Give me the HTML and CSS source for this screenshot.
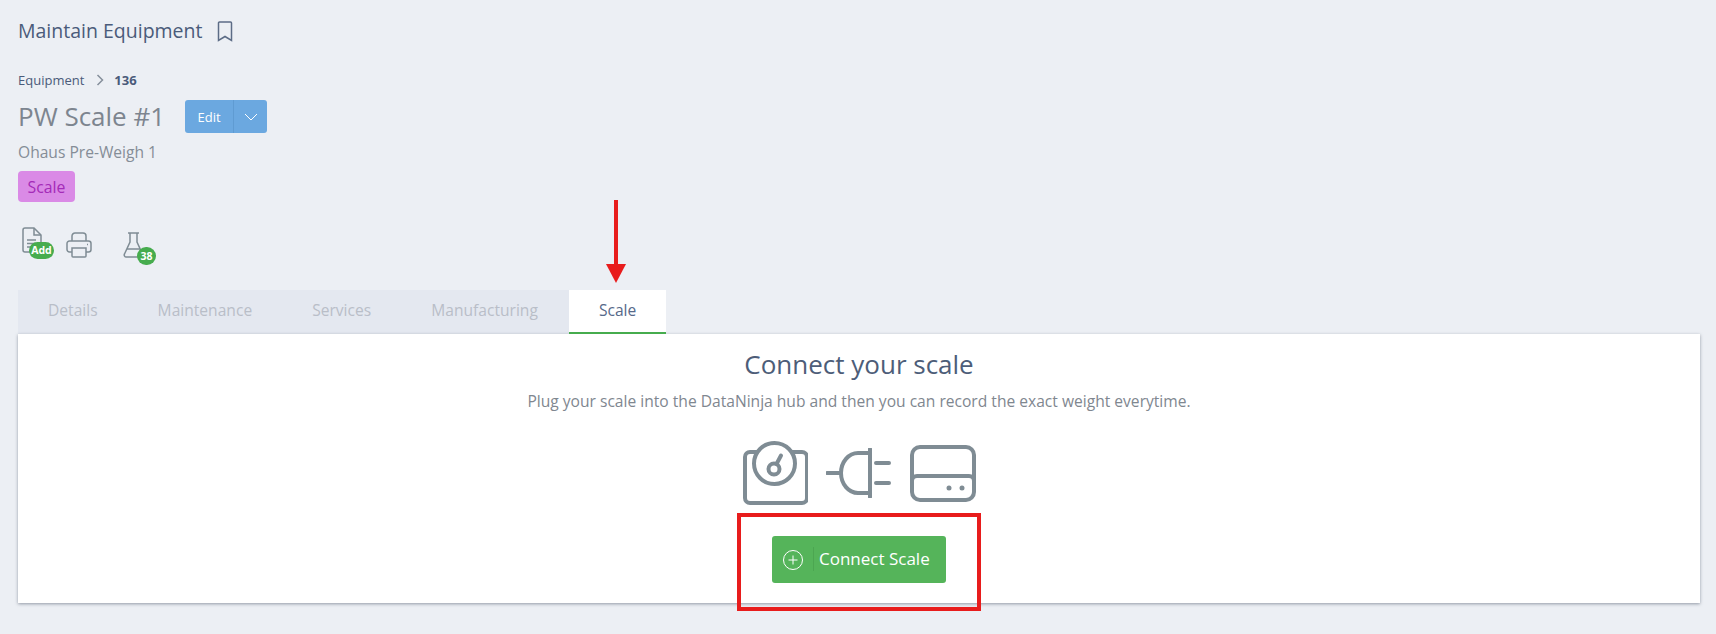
FILE: index.html
```html
<!DOCTYPE html>
<html lang="en">
<head>
  <meta charset="UTF-8" />
  <title>Maintain Equipment</title>
  <link rel="stylesheet" href="styles.css">
</head>
<body>
  <div class="page-title">
    <h1>Maintain Equipment</h1>
    <svg class="bookmark" width="16" height="21" viewBox="0 0 16 21"><path d="M2.5 1h11a1 1 0 0 1 1 1v17.5L8 15.5l-6.500 4V2a1 1 0 0 1 1-1z"/></svg>
  </div>

  <div class="breadcrumb">
    <span>Equipment</span>
    <svg width="8" height="12" viewBox="0 0 8 12"><path d="M1.500 1l5 5-5 5"/></svg>
    <b>136</b>
  </div>

  <div class="heading-row">
    <h2>PW Scale #1</h2>
    <div class="btn-group">
      <button class="btn-edit">Edit</button>
      <button class="btn-caret"><svg width="14" height="8" viewBox="0 0 14 8"><path d="M1 1l6 6 6-6"/></svg></button>
    </div>
  </div>
  <div class="subtitle">Ohaus Pre-Weigh 1</div>
  <span class="tag">Scale</span>

  <div class="actions">
    <div class="action action-doc">
      <svg width="20" height="27" viewBox="0 0 20 27"><path d="M3 1h9l7 7v15a2 2 0 0 1-2 2H3a2 2 0 0 1-2-2V3a2 2 0 0 1 2-2z"/><path d="M12 1v7h7M5 13h9M5 16.500h9M5 20h6"/></svg>
      <span class="badge badge-add">Add</span>
    </div>
    <div class="action action-print">
      <svg width="26" height="26" viewBox="0 0 26 26"><path d="M6 9V4a3 3 0 0 1 3-3h8a3 3 0 0 1 3 3v5"/><path d="M6 20H3.500A2.500 2.500 0 0 1 1 17.500V11.500A2.500 2.500 0 0 1 3.500 9h19a2.500 2.500 0 0 1 2.500 2.500v6a2.500 2.500 0 0 1-2.500 2.500H20"/><path d="M6 16h14v8a1 1 0 0 1-1 1H7a1 1 0 0 1-1-1z"/><path d="M21 12.500h1"/></svg>
    </div>
    <div class="action action-flask">
      <svg width="21" height="26" viewBox="0 0 21 26"><path d="M5 1h11M7 1v9L1.500 22a2 2 0 0 0 2 3h14a2 2 0 0 0 2-3L14 10V1M4 17h13"/></svg>
      <span class="badge badge-count">38</span>
    </div>
  </div>

  <div class="tabs">
    <div class="tab">Details</div>
    <div class="tab">Maintenance</div>
    <div class="tab">Services</div>
    <div class="tab">Manufacturing</div>
    <div class="tab active">Scale</div>
  </div>

  <div class="card">
    <h3>Connect your scale</h3>
    <p>Plug your scale into the DataNinja hub and then you can record the exact weight everytime.</p>
    <div class="hero-icons">
      <svg width="66" height="64" viewBox="0 0 66 64">
        <rect x="3" y="11" width="62" height="51" rx="5"/>
        <circle class="knock" cx="32.500" cy="22.500" r="20.500"/>
        <circle cx="32" cy="28" r="5.500"/>
        <path d="M34.500 23l4.500-8.500"/>
      </svg>
      <svg width="66" height="50" viewBox="0 0 66 50">
        <path d="M1 25h14M44 5H32a17 20 0 0 0 0 40h12M44 1v48M50 15h13M50 35h13"/>
      </svg>
      <svg width="66" height="57" viewBox="0 0 66 57">
        <rect x="2" y="2" width="62" height="53" rx="8"/>
        <path d="M2 36a5 5 0 0 1 5-5h52a5 5 0 0 1 5 5"/>
        <circle class="dot" cx="39" cy="43" r="2.500"/>
        <circle class="dot" cx="52" cy="43" r="2.500"/>
      </svg>
    </div>
    <button class="btn-connect">
      <svg width="22" height="22" viewBox="0 0 22 22"><circle cx="11" cy="11" r="9.500"/><path d="M11 6.500v9M6.500 11h9"/></svg>
      <span>Connect Scale</span>
    </button>
  </div>

  <!-- red annotations drawn on top of the screenshot -->
  <div class="note-arrow"></div>
  <div class="note-box"></div>
</body>
</html>
```

FILE: styles.css
```css
* { box-sizing: border-box; }
html, body { height: 100%; }
body { margin: 0; padding: 18px 16px 0 18px; background: #ecEff4; color: #4a5b7a; font-family: "Open Sans", "Noto Sans", sans-serif; position: relative; overflow: hidden; }
svg { fill: none; display: block; }

.page-title { display: flex; align-items: center; height: 26px; }
h1 { margin: 0; font-size: 19.500px; font-weight: 400; line-height: 26px; }
.bookmark { margin-left: 15px; }
.bookmark path { stroke: #5c6c86; stroke-width: 1.500; }

.breadcrumb { display: flex; align-items: center; margin-top: 28px; height: 16px; font-size: 13px; }
.breadcrumb svg { margin: 0 10px 0 12px; }
.breadcrumb svg path { stroke: #868f9c; stroke-width: 1.500; }
.breadcrumb b { font-weight: 700; }

.heading-row { display: flex; align-items: center; margin-top: 12px; height: 33px; }
h2 { margin: 0; font-size: 26px; font-weight: 400; color: #7d858f; line-height: 33px; }
.btn-group { display: flex; margin-left: 20px; height: 33px; background: #6ba8e0; border-radius: 3px; }
.btn-group button { border: none; background: none; color: #fff; padding: 0; font-family: inherit; font-size: 13px; display: flex; align-items: center; justify-content: center; }
.btn-edit { width: 48px; }
.btn-caret { width: 34px; border-left: 1px solid #5f9bd2 !important; }
.btn-caret path { stroke: #fff; stroke-width: 1; }

.subtitle { margin-top: 9px; font-size: 15.600px; line-height: 20px; color: #858d97; }
.tag { display: block; width: 57px; height: 31px; margin-top: 9px; background: #da8ae6; border-radius: 4px; color: #a42bb8; font-size: 15.800px; line-height: 32px; text-align: center; }

.actions { display: flex; align-items: flex-start; margin-top: 25px; height: 38px; padding-left: 4px; }
.action { position: relative; }
.action svg path { stroke: #7f8c94; stroke-width: 1.500; }
.action-print { margin: 5px 0 0 24px; }
.action-flask { margin: 5px 0 0 31px; }
.badge { position: absolute; background: #46ac4e; color: #fff; font-size: 10.500px; font-weight: 700; text-align: center; border-radius: 9px; }
.badge-add { left: 7px; top: 15px; width: 25px; height: 17px; line-height: 17px; }
.badge-count { left: 14px; top: 15px; width: 19px; height: 18px; line-height: 18px; }

.tabs { display: flex; margin-top: 25px; height: 44px; background: #e4e8f0; width: fit-content; }
.tab { padding: 0 30px; font-size: 15.600px; line-height: 41px; color: #b9bec8; }
.tab.active { margin-left: 1px; background: #fff; color: #56698a; border-bottom: 2px solid #46ac4e; }

.card { height: 269px; background: #fff; box-shadow: 0 1px 3px rgba(60, 70, 90, 0.5); text-align: center; padding-top: 15px; }
h3 { margin: 0; font-size: 26px; font-weight: 400; line-height: 30px; color: #4d5d78; }
.card p { margin: 12px 0 0; font-size: 15.600px; line-height: 20px; color: #7f8790; }
.hero-icons { display: flex; align-items: center; justify-content: center; gap: 18px; margin-top: 30px; height: 64px; }
.hero-icons svg * { stroke: #7f8c94; stroke-width: 4; stroke-linecap: round; }
.hero-icons .knock { fill: #fff; }
.hero-icons .dot { fill: #7f8c94; stroke: none; }

.btn-connect { display: inline-flex; align-items: center; margin-top: 31px; width: 174px; height: 47px; padding: 0 0 0 10px; border: none; border-radius: 3px; background: #55b45a; color: #fff; font-family: inherit; font-size: 17px; line-height: 22px; }
.btn-connect svg * { stroke: #fff; stroke-width: 1; }
.btn-connect span { margin-left: 9px; padding-left: 5px; border-left: 1px solid #4ca651; line-height: 24px; margin-top: -2px; }

.note-arrow { position: absolute; left: 614px; top: 200px; width: 4px; height: 65px; background: #e81c1c; }
.note-arrow::after { content: ""; position: absolute; left: -8px; top: 64px; border-left: 10px solid transparent; border-right: 10px solid transparent; border-top: 19px solid #e81c1c; }
.note-box { position: absolute; left: 737px; top: 513px; width: 244px; height: 98px; border: 4px solid #e81c1c; }
```
